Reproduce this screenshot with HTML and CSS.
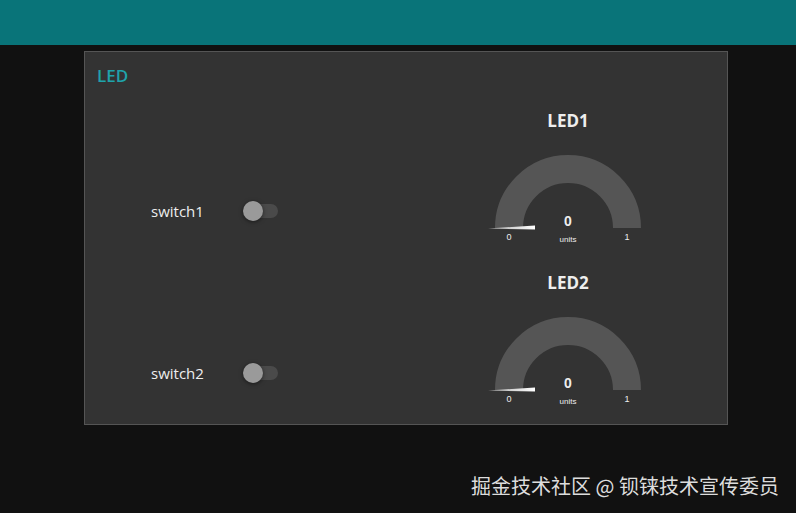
FILE: index.html
```html
<!DOCTYPE html>
<html lang="zh-CN">
<head>
    <meta charset="UTF-8">
    <meta name="viewport" content="width=device-width, initial-scale=1.0">
    <title>Node-RED Dashboard</title>
    <link rel="stylesheet" href="styles.css">
</head>
<body>
    <div class="toolbar"></div>
    <div class="content">
        <div class="group">
            <div class="group-title">LED</div>
            <div class="group-grid">
                <div class="switch-cell">
                    <span class="switch-label">switch1</span>
                    <span class="switch">
                        <span class="switch-track"></span>
                        <span class="switch-thumb"></span>
                    </span>
                </div>
                <div class="gauge-cell">
                    <div class="gauge-title">LED1</div>
                    <svg class="gauge" width="318" height="110" viewBox="0 0 318 110">
                        <defs>
                            <linearGradient id="needle1" x1="0" x2="1" y1="0" y2="0">
                                <stop offset="0" stop-color="#aaa"/>
                                <stop offset="1" stop-color="#fff"/>
                            </linearGradient>
                        </defs>
                        <path d="M 100 86 A 59 59 0 0 1 218 86" fill="none" stroke="#555" stroke-width="28"/>
                        <polygon points="79,86.5 126,83.5 126,87.5" fill="url(#needle1)"/>
                        <text x="159" y="84" class="gauge-value">0</text>
                        <text x="100" y="98" class="gauge-limit">0</text>
                        <text x="218" y="98" class="gauge-limit">1</text>
                        <text x="159" y="100" class="gauge-units">units</text>
                    </svg>
                </div>
                <div class="switch-cell">
                    <span class="switch-label">switch2</span>
                    <span class="switch">
                        <span class="switch-track"></span>
                        <span class="switch-thumb"></span>
                    </span>
                </div>
                <div class="gauge-cell">
                    <div class="gauge-title">LED2</div>
                    <svg class="gauge" width="318" height="110" viewBox="0 0 318 110">
                        <defs>
                            <linearGradient id="needle2" x1="0" x2="1" y1="0" y2="0">
                                <stop offset="0" stop-color="#aaa"/>
                                <stop offset="1" stop-color="#fff"/>
                            </linearGradient>
                        </defs>
                        <path d="M 100 86 A 59 59 0 0 1 218 86" fill="none" stroke="#555" stroke-width="28"/>
                        <polygon points="79,86.5 126,83.5 126,87.5" fill="url(#needle2)"/>
                        <text x="159" y="84" class="gauge-value">0</text>
                        <text x="100" y="98" class="gauge-limit">0</text>
                        <text x="218" y="98" class="gauge-limit">1</text>
                        <text x="159" y="100" class="gauge-units">units</text>
                    </svg>
                </div>
            </div>
        </div>
    </div>
    <div class="watermark">掘金技术社区 @ 钡铼技术宣传委员</div>
</body>
</html>
```

FILE: styles.css
```css
body {
    margin: 0;
    height: 100vh;
    background-color: #111111;
    font-family: "Open Sans", "Noto Sans", sans-serif;
    color: #eeeeee;
    overflow: hidden;
    position: relative;
}

.toolbar {
    height: 45px;
    background-color: #097479;
}

.content {
    padding: 6px 0 0 84px;
}

.group {
    width: 642px;
    height: 372px;
    background-color: #333333;
    border: 1px solid #555555;
}

.group-title {
    height: 48px;
    line-height: 48px;
    padding-left: 12px;
    font-size: 17px;
    font-weight: 600;
    color: #1fa3ab;
}

.group-grid {
    display: grid;
    grid-template-columns: 324px 318px;
    grid-template-rows: 162px 162px;
}

.switch-cell {
    display: flex;
    align-items: center;
    height: 20px;
    padding: 101px 0 0 66px;
}

.switch-label {
    width: 92px;
    font-size: 15px;
    line-height: 20px;
}

.switch {
    position: relative;
    display: block;
    width: 35px;
    height: 20px;
}

.switch-track {
    position: absolute;
    right: 0;
    top: 3px;
    width: 24px;
    height: 14px;
    border-radius: 7px;
    background-color: #4a4a4a;
}

.switch-thumb {
    position: absolute;
    left: 0;
    top: 0;
    width: 20px;
    height: 20px;
    border-radius: 50%;
    background-color: #9a9a9a;
    box-shadow: 0 1px 4px rgba(0, 0, 0, 0.5);
}

.gauge-cell {
    display: flex;
    flex-direction: column;
    align-items: center;
}

.gauge-title {
    height: 42px;
    line-height: 42px;
    font-size: 17px;
    font-weight: 700;
    color: #eeeeee;
}

.gauge {
    display: block;
}

.gauge text {
    text-anchor: middle;
    fill: #eeeeee;
    font-family: "Liberation Sans", Arial, sans-serif;
}

.gauge-value {
    font-size: 14px;
    font-weight: 700;
}

.gauge-limit {
    font-size: 9px;
}

.gauge-units {
    font-size: 8px;
}

.watermark {
    position: absolute;
    left: 471px;
    top: 472px;
    font-family: "Noto Sans CJK SC", "Noto Sans", sans-serif;
    font-size: 20px;
    line-height: 28px;
    color: #dddddd;
    white-space: nowrap;
}
```
